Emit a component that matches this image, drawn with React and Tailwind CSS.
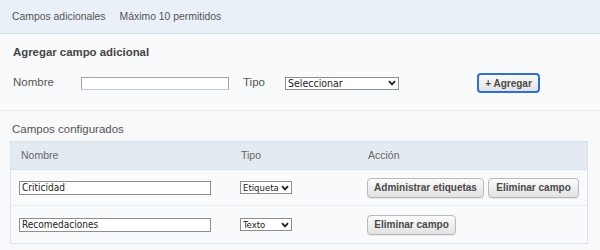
const rows = [
  { name: "Criticidad", type: "Etiqueta", labels: true },
  { name: "Recomedaciones", type: "Texto", labels: false },
];

function Chevron() {
  return (
    <svg width="8" height="6" viewBox="0 0 8 6" className="shrink-0">
      <path d="M1 1.2 L4 4.4 L7 1.2" fill="none" stroke="#222" strokeWidth="1.8" />
    </svg>
  );
}

function FakeSelect({ value, className }) {
  return (
    <div
      className={
        "flex h-[13px] items-center justify-between border border-[#8e8e8e] bg-white pl-[2px] pr-[2px] leading-none text-[#222] " +
        className
      }
      style={{ fontFamily: '"DejaVu Sans Condensed", "Liberation Sans", sans-serif' }}
    >
      <span>{value}</span>
      <Chevron />
    </div>
  );
}

function GrayButton({ children, className = "" }) {
  return (
    <button
      type="button"
      className={
        "flex h-[20px] items-center justify-center rounded-[4px] border border-[#b9b9b9] bg-gradient-to-b from-[#fbfbfb] to-[#e2e2e2] text-[10px] font-bold text-[#4a4a4a] shadow-[0_1px_0_rgba(0,0,0,0.08)] " +
        className
      }
    >
      {children}
    </button>
  );
}

export default function App() {
  return (
    <div
      className="h-[250px] w-[600px] overflow-hidden bg-[#f8f9fb] text-[#555]"
      style={{ fontFamily: '"Liberation Sans", Arial, sans-serif' }}
    >
      <div className="flex h-[34px] items-center gap-[14px] border-b border-[#d6e1ec] bg-[#e9f0f7] px-[12px] text-[10.4px] text-[#555]">
        <span>Campos adicionales</span>
        <span>Máximo 10 permitidos</span>
      </div>

      <div className="h-[77px] border-b border-[#e6e9ee] bg-[#f9fafc] px-[13px] pt-[10px]">
        <h2 className="text-[11.4px] font-bold leading-[16px] text-[#444]">Agregar campo adicional</h2>
        <div className="mt-[13px] flex h-[20px] items-center text-[11.5px]">
          <span className="w-[68px]">Nombre</span>
          <div className="h-[13px] w-[148px] border border-[#a3a3a3] border-b-[#c9c9c9] bg-white" />
          <span className="ml-[14px] w-[42px]">Tipo</span>
          <FakeSelect value="Seleccionar" className="w-[114px] text-[10.5px]" />
          <button
            type="button"
            className="ml-[78px] flex h-[20px] w-[63px] items-center justify-center rounded-[4px] border-2 border-[#2f6fd8] bg-gradient-to-b from-[#fafafa] to-[#e3e3e3] text-[10px] font-bold text-[#4a4a4a]"
          >
            + Agregar
          </button>
        </div>
      </div>

      <div className="px-[10px] pt-[10px]">
        <div className="pl-[2px] text-[11.5px] leading-[16px] text-[#555]">Campos configurados</div>
        <div className="mt-[4px] w-[578px] border border-[#d8e2ec] bg-[#f8fafc]">
          <div className="flex h-[28px] items-center border-b border-[#d8e2ec] bg-[#e3eaf1] pl-[10px] text-[10.5px] text-[#666]">
            <span className="w-[220px]">Nombre</span>
            <span className="w-[127px]">Tipo</span>
            <span>Acción</span>
          </div>
          {rows.map((row, i) => (
            <div
              key={row.name}
              className={
                "flex items-center pl-[8px] " +
                (i === 0 ? "h-[36px] border-b border-[#e8ecf0]" : "h-[37px]")
              }
            >
              <div className="w-[221px]">
                <div
                  className="flex h-[14px] w-[192px] items-center border border-[#8e8e8e] bg-white px-[2px] text-[10px] text-[#222]"
                  style={{ fontFamily: '"DejaVu Sans Condensed", "Liberation Sans", sans-serif' }}
                >
                  {row.name}
                </div>
              </div>
              <div className="w-[127px]">
                <FakeSelect value={row.type} className="w-[52px] text-[9.5px]" />
              </div>
              <div className="flex gap-[4px]">
                {row.labels && <GrayButton className="w-[117px]">Administrar etiquetas</GrayButton>}
                <GrayButton className={row.labels ? "w-[91px]" : "w-[89px]"}>Eliminar campo</GrayButton>
              </div>
            </div>
          ))}
        </div>
      </div>
    </div>
  );
}
